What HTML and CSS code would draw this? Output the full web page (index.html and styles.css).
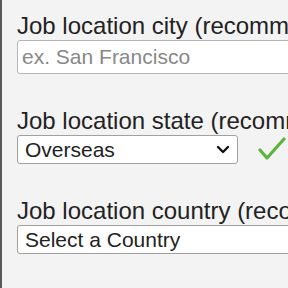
FILE: index.html
```html
<!DOCTYPE html>
<html>
<head>
    <title>Job Location</title>
    <link rel="stylesheet" href="styles.css">
</head>
<body>
    <div class="form">
        <div class="field">
            <label for="city">Job location city (recommended)</label>
            <input type="text" id="city" placeholder="ex. San Francisco">
        </div>
        <div class="field">
            <label for="state">Job location state (recommended)</label>
            <div class="select-row">
                <div class="select-wrap">
                    <select id="state" class="short">
                        <option>Overseas</option>
                    </select>
                    <svg class="chevron" width="14" height="9" viewBox="0 0 14 9">
                        <path d="M2 2 L7 7 L12 2" fill="none" stroke="#111" stroke-width="2.4" stroke-linecap="round" stroke-linejoin="round"/>
                    </svg>
                </div>
                <svg class="check" width="28" height="24" viewBox="0 0 28 24">
                    <path d="M2 13 L9 21 L26 2" fill="none" stroke="#5db43a" stroke-width="3.2" stroke-linecap="round" stroke-linejoin="round"/>
                </svg>
            </div>
        </div>
        <div class="field">
            <label for="country">Job location country (recommended)</label>
            <div class="select-wrap">
                <select id="country" class="wide">
                    <option>Select a Country</option>
                </select>
            </div>
        </div>
    </div>
</body>
</html>
```

FILE: styles.css
```css
html, body {
    height: 100%;
}
body {
    margin: 0;
    background: #f3f3f3;
    font-family: "Liberation Sans", Arial, sans-serif;
    overflow: hidden;
}
.form {
    min-height: 100%;
    border-left: 2px solid #5a5a5a;
    padding: 12px 0 0 15px;
    box-sizing: border-box;
}
.field {
    margin-bottom: 33px;
}
.field label {
    display: block;
    font-size: 24px;
    line-height: 27px;
    color: #222;
    white-space: nowrap;
    margin-bottom: 1px;
}
input[type="text"] {
    width: 320px;
    height: 34px;
    box-sizing: border-box;
    font-family: inherit;
    font-size: 21px;
    padding: 0 4px;
    border: 1px solid #b5b5b5;
    border-radius: 3px;
    background: white;
}
input::placeholder {
    color: #888;
}
.select-wrap {
    position: relative;
    display: inline-block;
}
select {
    appearance: none;
    display: block;
    height: 29px;
    box-sizing: border-box;
    font-family: inherit;
    font-size: 21px;
    color: #222;
    padding: 0 7px;
    border: 1px solid #a0a0a0;
    border-radius: 3px;
    background-color: white;
}
.chevron {
    position: absolute;
    right: 8px;
    top: 10px;
}
.short {
    width: 221px;
}
.wide {
    width: 320px;
}
.select-row {
    display: flex;
    align-items: center;
    gap: 20px;
}
.check {
    margin-top: -2px;
}
```
